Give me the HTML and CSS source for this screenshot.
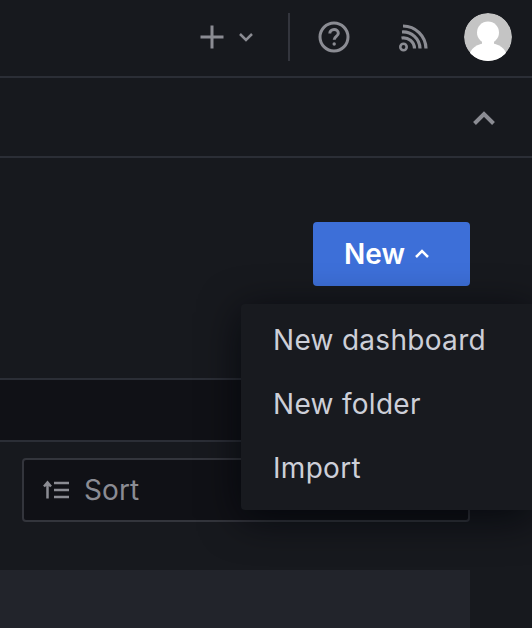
FILE: index.html
```html
<!DOCTYPE html>
<html lang="en">
<head>
<meta charset="utf-8">
<title>Dashboards</title>
<link rel="stylesheet" href="styles.css">
</head>
<body>
<div class="page">
  <header class="topbar">
    <div class="add">
      <svg class="icon-plus" viewBox="0 0 26 26"><path d="M13 1.500v23M1.500 13h23"/></svg>
      <svg class="icon-chev-down" viewBox="0 0 16 10"><path d="M2 2l6 6 6-6"/></svg>
    </div>
    <span class="divider"></span>
    <svg class="icon-help" viewBox="0 0 32 32"><circle cx="16" cy="16" r="14"/><path d="M11.800 12.600c0-2.500 1.900-4.100 4.300-4.100s4.200 1.500 4.200 3.700c0 3.200-4.100 3.200-4.100 6.600"/><circle class="dot" cx="16.200" cy="23" r="1.700"/></svg>
    <svg class="icon-rss" viewBox="0 0 30 30"><circle cx="5.500" cy="24" r="3.200"/><path d="M3.500 15a11 11 0 0 1 13 10.500M4 9a17 17 0 0 1 18 16.500M5 3a23 23 0 0 1 23 22.500"/></svg>
    <div class="avatar">
      <svg viewBox="0 0 48 48"><circle class="bg" cx="24" cy="24" r="24"/><circle class="fg" cx="24" cy="19.500" r="11"/><ellipse class="fg" cx="24" cy="44" rx="19" ry="14"/><rect class="fg" x="18" y="26" width="12" height="8"/></svg>
    </div>
  </header>
  <section class="subbar">
    <svg class="icon-chev-up" viewBox="0 0 24 16"><path d="M2.500 13.500L12 4l9.500 9.500"/></svg>
  </section>
  <section class="actions">
    <button class="new-btn" type="button">New
      <svg viewBox="0 0 16 10"><path d="M2 8l6-6 6 6"/></svg>
    </button>
  </section>
  <section class="band"></section>
  <section class="filters">
    <div class="sort">
      <svg viewBox="0 0 28 20"><path d="M5.500 18.500V3M2 6.500L5.500 2.500 9 6.500M12 3h15M12 10h15M12 17h15"/></svg>
      <span>Sort</span>
    </div>
  </section>
  <section class="row"></section>
  <nav class="menu">
    <a class="menu-item">New dashboard</a>
    <a class="menu-item">New folder</a>
    <a class="menu-item">Import</a>
  </nav>
</div>
</body>
</html>
```
FILE: styles.css
```css
* { box-sizing: border-box; }
html, body { margin: 0; height: 100%; background: #17191e; overflow: hidden; }
body { font-family: Inter, "Liberation Sans", sans-serif; }
svg { display: block; fill: none; }

.page { position: relative; width: 532px; height: 628px; display: flex; flex-direction: column; background: #17191e; }

.topbar { height: 78px; flex: none; border-bottom: 2px solid #2b2e36; display: flex; align-items: center; padding: 0 20px 2px 0; }
.add { margin-left: 199px; display: flex; align-items: center; gap: 13px; }
.icon-plus { width: 26px; height: 26px; stroke: #8b8c93; stroke-width: 3; }
.icon-chev-down { width: 16px; height: 10px; stroke: #8b8c93; stroke-width: 2.500; }
.divider { width: 2px; height: 48px; margin-left: 34px; background: #33353d; }
.icon-help { width: 32px; height: 32px; margin-left: 28px; stroke: #8b8c93; stroke-width: 3; }
.icon-help .dot { fill: #8b8c93; stroke: none; }
.icon-rss { width: 30px; height: 30px; margin-left: 48px; margin-top: 2px; stroke: #8b8c93; stroke-width: 3.200; }
.icon-rss circle { stroke-width: 2.600; }
.avatar { width: 48px; height: 48px; margin-left: 36px; border-radius: 50%; overflow: hidden; }
.avatar .bg { fill: #c4c4c4; }
.avatar .fg { fill: #fff; }

.subbar { height: 80px; flex: none; border-bottom: 2px solid #2b2e36; display: flex; align-items: center; justify-content: flex-end; padding: 2px 36px 0 0; }
.icon-chev-up { width: 24px; height: 16px; stroke: #8b8c93; stroke-width: 4; }

.actions { height: 222px; flex: none; display: flex; justify-content: flex-end; align-items: flex-start; padding: 64px 62px 0 0; border-bottom: 2px solid #2b2e36; }
.new-btn { width: 157px; height: 64px; border: 0; border-radius: 4px; background: #3d6fd8; color: #fff; font: 600 28px/1 Inter, sans-serif; display: flex; align-items: center; justify-content: center; gap: 9px; padding: 0 9px 0 0; }
.new-btn svg { width: 16px; height: 10px; stroke: #fff; stroke-width: 2.500; }

.band { height: 62px; flex: none; background: #101116; border-bottom: 2px solid #2b2e36; }

.filters { height: 128px; flex: none; padding: 16px 62px 0 22px; }
.sort { height: 64px; background: #101116; border: 2px solid #33353c; border-radius: 4px; display: flex; align-items: center; gap: 14px; padding-left: 18px; color: #8b8c93; font-size: 28px; letter-spacing: .1px; }
.sort svg { width: 28px; height: 20px; stroke: #8b8c93; stroke-width: 2.500; }

.row { flex: 1; width: 470px; background: #22242b; }

.menu { position: absolute; left: 241px; top: 304px; width: 291px; height: 206px; display: flex; flex-direction: column; padding-top: 4px; background: #181a1f; border-radius: 4px 0 0 4px; box-shadow: 0 8px 40px rgba(1, 4, 9, .75); }
.menu-item { height: 64px; display: flex; align-items: center; padding-left: 32px; color: #cdcfd8; font-size: 28px; letter-spacing: .3px; }
```
